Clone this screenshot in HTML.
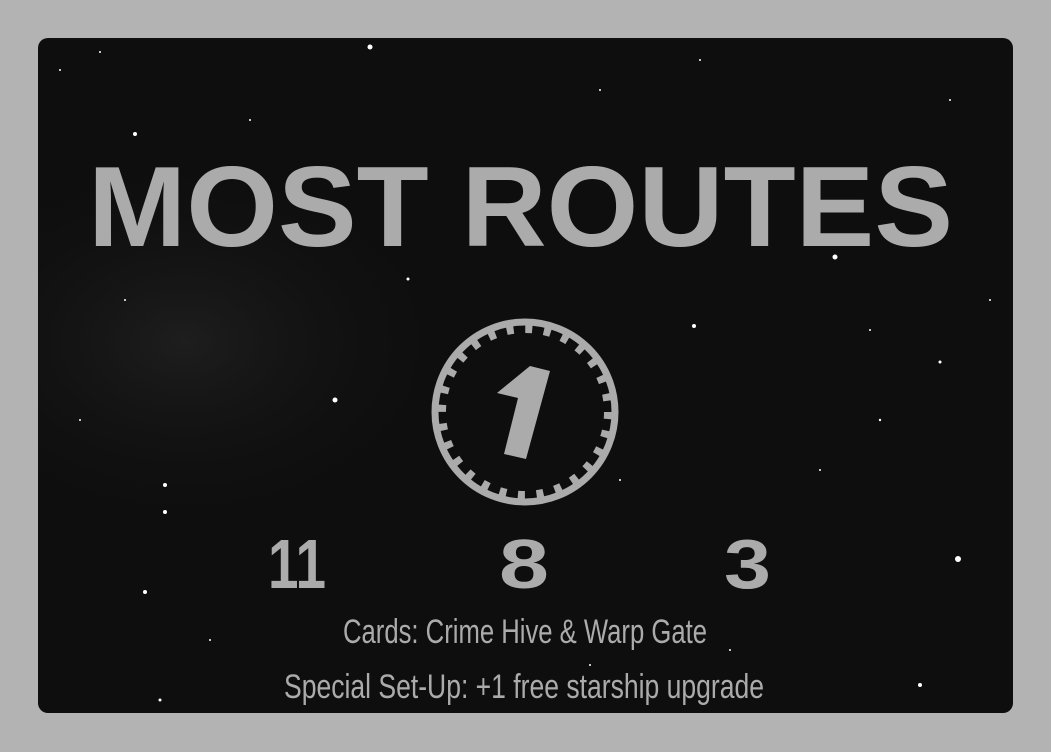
<!DOCTYPE html>
<html><head><style>
html,body{margin:0;padding:0;background:#b3b3b3;width:1051px;height:752px;overflow:hidden}
svg{display:block}
</style></head><body>
<svg width="1051" height="752" viewBox="0 0 1051 752" xmlns="http://www.w3.org/2000/svg">
<defs>
<radialGradient id="neb" cx="0.15" cy="0.45" r="0.3">
<stop offset="0" stop-color="#1e1e1e"/><stop offset="1" stop-color="#0e0e0e" stop-opacity="0"/>
</radialGradient>
</defs>
<rect x="38" y="38" width="975" height="675" rx="10" fill="#0e0e0e"/>
<rect x="38" y="38" width="975" height="675" rx="10" fill="url(#neb)"/>
<g fill="#fff">
<circle cx="370" cy="47" r="2.5"/><circle cx="135" cy="134" r="2"/><circle cx="835" cy="257" r="2.5"/>
<circle cx="335" cy="400" r="2.5"/><circle cx="165" cy="485" r="2"/><circle cx="165" cy="512" r="2"/>
<circle cx="958" cy="559" r="3"/><circle cx="694" cy="326" r="2"/><circle cx="408" cy="279" r="1.5"/>
<circle cx="940" cy="362" r="1.5"/><circle cx="880" cy="420" r="1.2"/><circle cx="145" cy="592" r="2"/>
<circle cx="920" cy="685" r="2"/><circle cx="160" cy="700" r="1.5"/><circle cx="100" cy="52" r="1"/>
<circle cx="60" cy="70" r="1"/><circle cx="250" cy="120" r="1"/><circle cx="600" cy="90" r="1"/>
<circle cx="700" cy="60" r="1"/><circle cx="950" cy="100" r="1"/><circle cx="990" cy="300" r="1"/>
<circle cx="620" cy="480" r="1"/><circle cx="820" cy="470" r="1"/><circle cx="210" cy="640" r="1"/>
<circle cx="730" cy="650" r="1"/><circle cx="590" cy="665" r="1"/><circle cx="80" cy="420" r="1"/>
<circle cx="125" cy="300" r="1"/><circle cx="760" cy="220" r="1"/><circle cx="870" cy="330" r="1"/>
</g>
<g fill="#ababab">
<text x="88" y="246" font-family="Liberation Sans, sans-serif" font-weight="bold" font-size="114" textLength="865" lengthAdjust="spacingAndGlyphs">MOST ROUTES</text>
<text x="268" y="588" font-family="Liberation Sans, sans-serif" font-weight="bold" font-size="70" textLength="58" lengthAdjust="spacingAndGlyphs">11</text>
<text x="499" y="588" font-family="Liberation Sans, sans-serif" font-weight="bold" font-size="70" textLength="50" lengthAdjust="spacingAndGlyphs">8</text>
<text x="724" y="588" font-family="Liberation Sans, sans-serif" font-weight="bold" font-size="70" textLength="47" lengthAdjust="spacingAndGlyphs">3</text>
<text x="343" y="643" font-family="Liberation Sans, sans-serif" font-size="34" textLength="364" lengthAdjust="spacingAndGlyphs">Cards: Crime Hive &amp; Warp Gate</text>
<text x="284" y="698" font-family="Liberation Sans, sans-serif" font-size="34" textLength="480" lengthAdjust="spacingAndGlyphs">Special Set-Up: +1 free starship upgrade</text>
<polygon points="497,393 530,366 550,371 526,459 504,454 518,398"/>
</g>
<circle cx="525" cy="412" r="90" fill="none" stroke="#ababab" stroke-width="7"/>
<circle cx="525" cy="412" r="83" fill="none" stroke="#ababab" stroke-width="8" stroke-dasharray="7 11.63"/>
</svg>
</body></html>
